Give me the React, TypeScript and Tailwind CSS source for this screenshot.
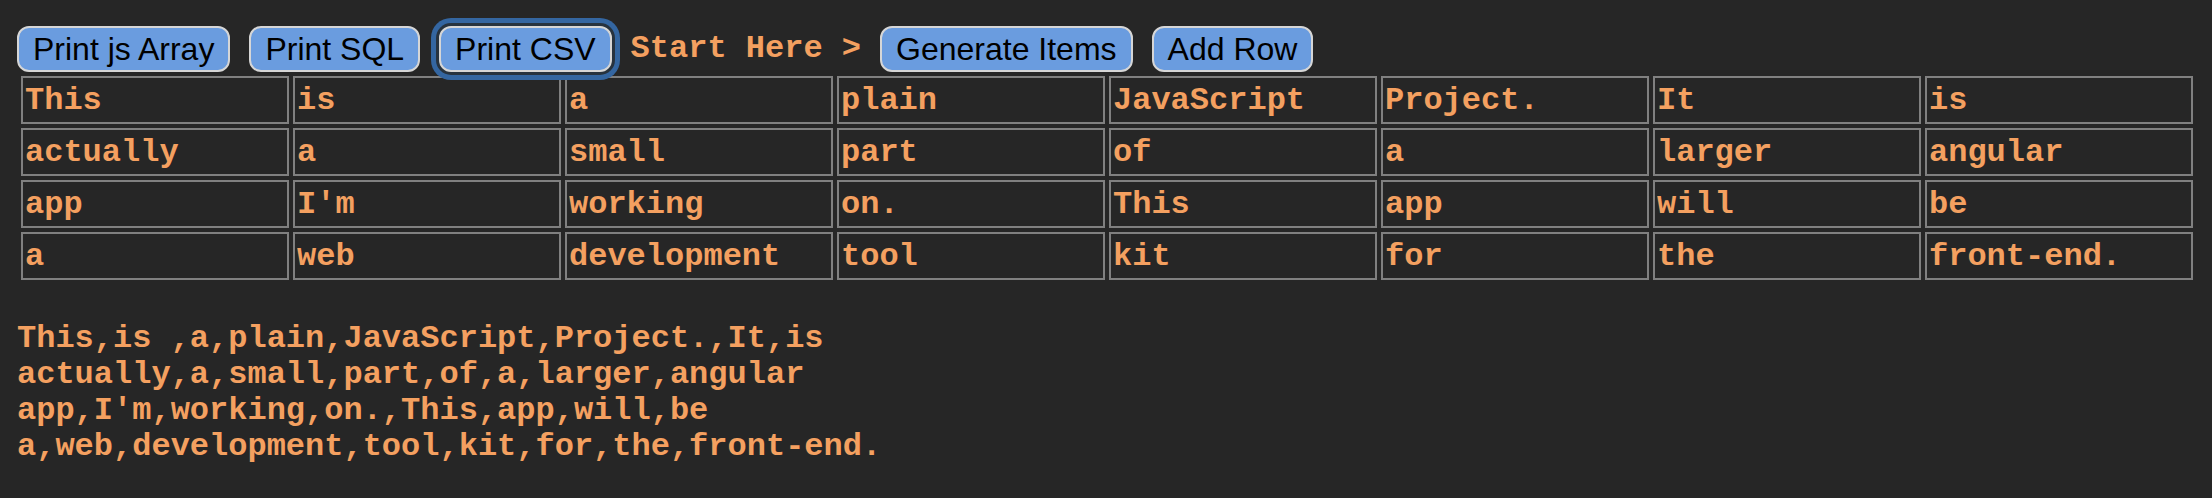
const rows: string[][] = [
  ['This', 'is ', 'a', 'plain', 'JavaScript', 'Project.', 'It', 'is'],
  ['actually', 'a', 'small', 'part', 'of', 'a', 'larger', 'angular'],
  ['app', "I'm", 'working', 'on.', 'This', 'app', 'will', 'be'],
  ['a', 'web', 'development', 'tool', 'kit', 'for', 'the', 'front-end.'],
];

function ActionButton({ label, focused }: { label: string; focused?: boolean }) {
  return (
    <button
      className={`h-[46px] px-[14px] rounded-[12px] border-2 border-[#d6d6d6] bg-[#6a9cdf] text-black text-[32px] leading-none font-normal font-['Liberation_Sans',Arial,sans-serif] ${
        focused ? 'shadow-[0_0_0_3px_#27333f,0_0_0_8px_#3466a1]' : ''
      }`}
    >
      {label}
    </button>
  );
}

export default function App() {
  const csv = rows.map(r => r.join(',')).join('\n');

  return (
    <div className="min-h-[498px] w-full bg-[#262626] pt-[26px] pl-[17px] font-['Liberation_Mono','Courier_New',monospace] font-bold text-[#f4a060]">
      {/* Toolbar */}
      <div className="flex items-center gap-[19px]">
        <ActionButton label="Print js Array" />
        <ActionButton label="Print SQL" />
        <ActionButton label="Print CSV" focused />
        <span className="text-[32px] leading-[36px] whitespace-pre">Start Here &gt;</span>
        <ActionButton label="Generate Items" />
        <ActionButton label="Add Row" />
      </div>

      {/* Grid of words */}
      <table className="table-fixed w-[2180px] border-separate border-spacing-[4px]">
        <tbody>
          {rows.map((row, i) => (
            <tr key={i}>
              {row.map((cell, j) => (
                <td key={j} className="border-2 border-[#808080] p-[2px] align-top">
                  <div className="h-[40px] pt-[3px] leading-[36px] text-[32px] whitespace-pre overflow-hidden">
                    {cell}
                  </div>
                </td>
              ))}
            </tr>
          ))}
        </tbody>
      </table>

      {/* CSV output */}
      <pre className="mt-[37px] text-[32px] leading-[36px] font-['Liberation_Mono','Courier_New',monospace] font-bold">
        {csv}
      </pre>
    </div>
  );
}
